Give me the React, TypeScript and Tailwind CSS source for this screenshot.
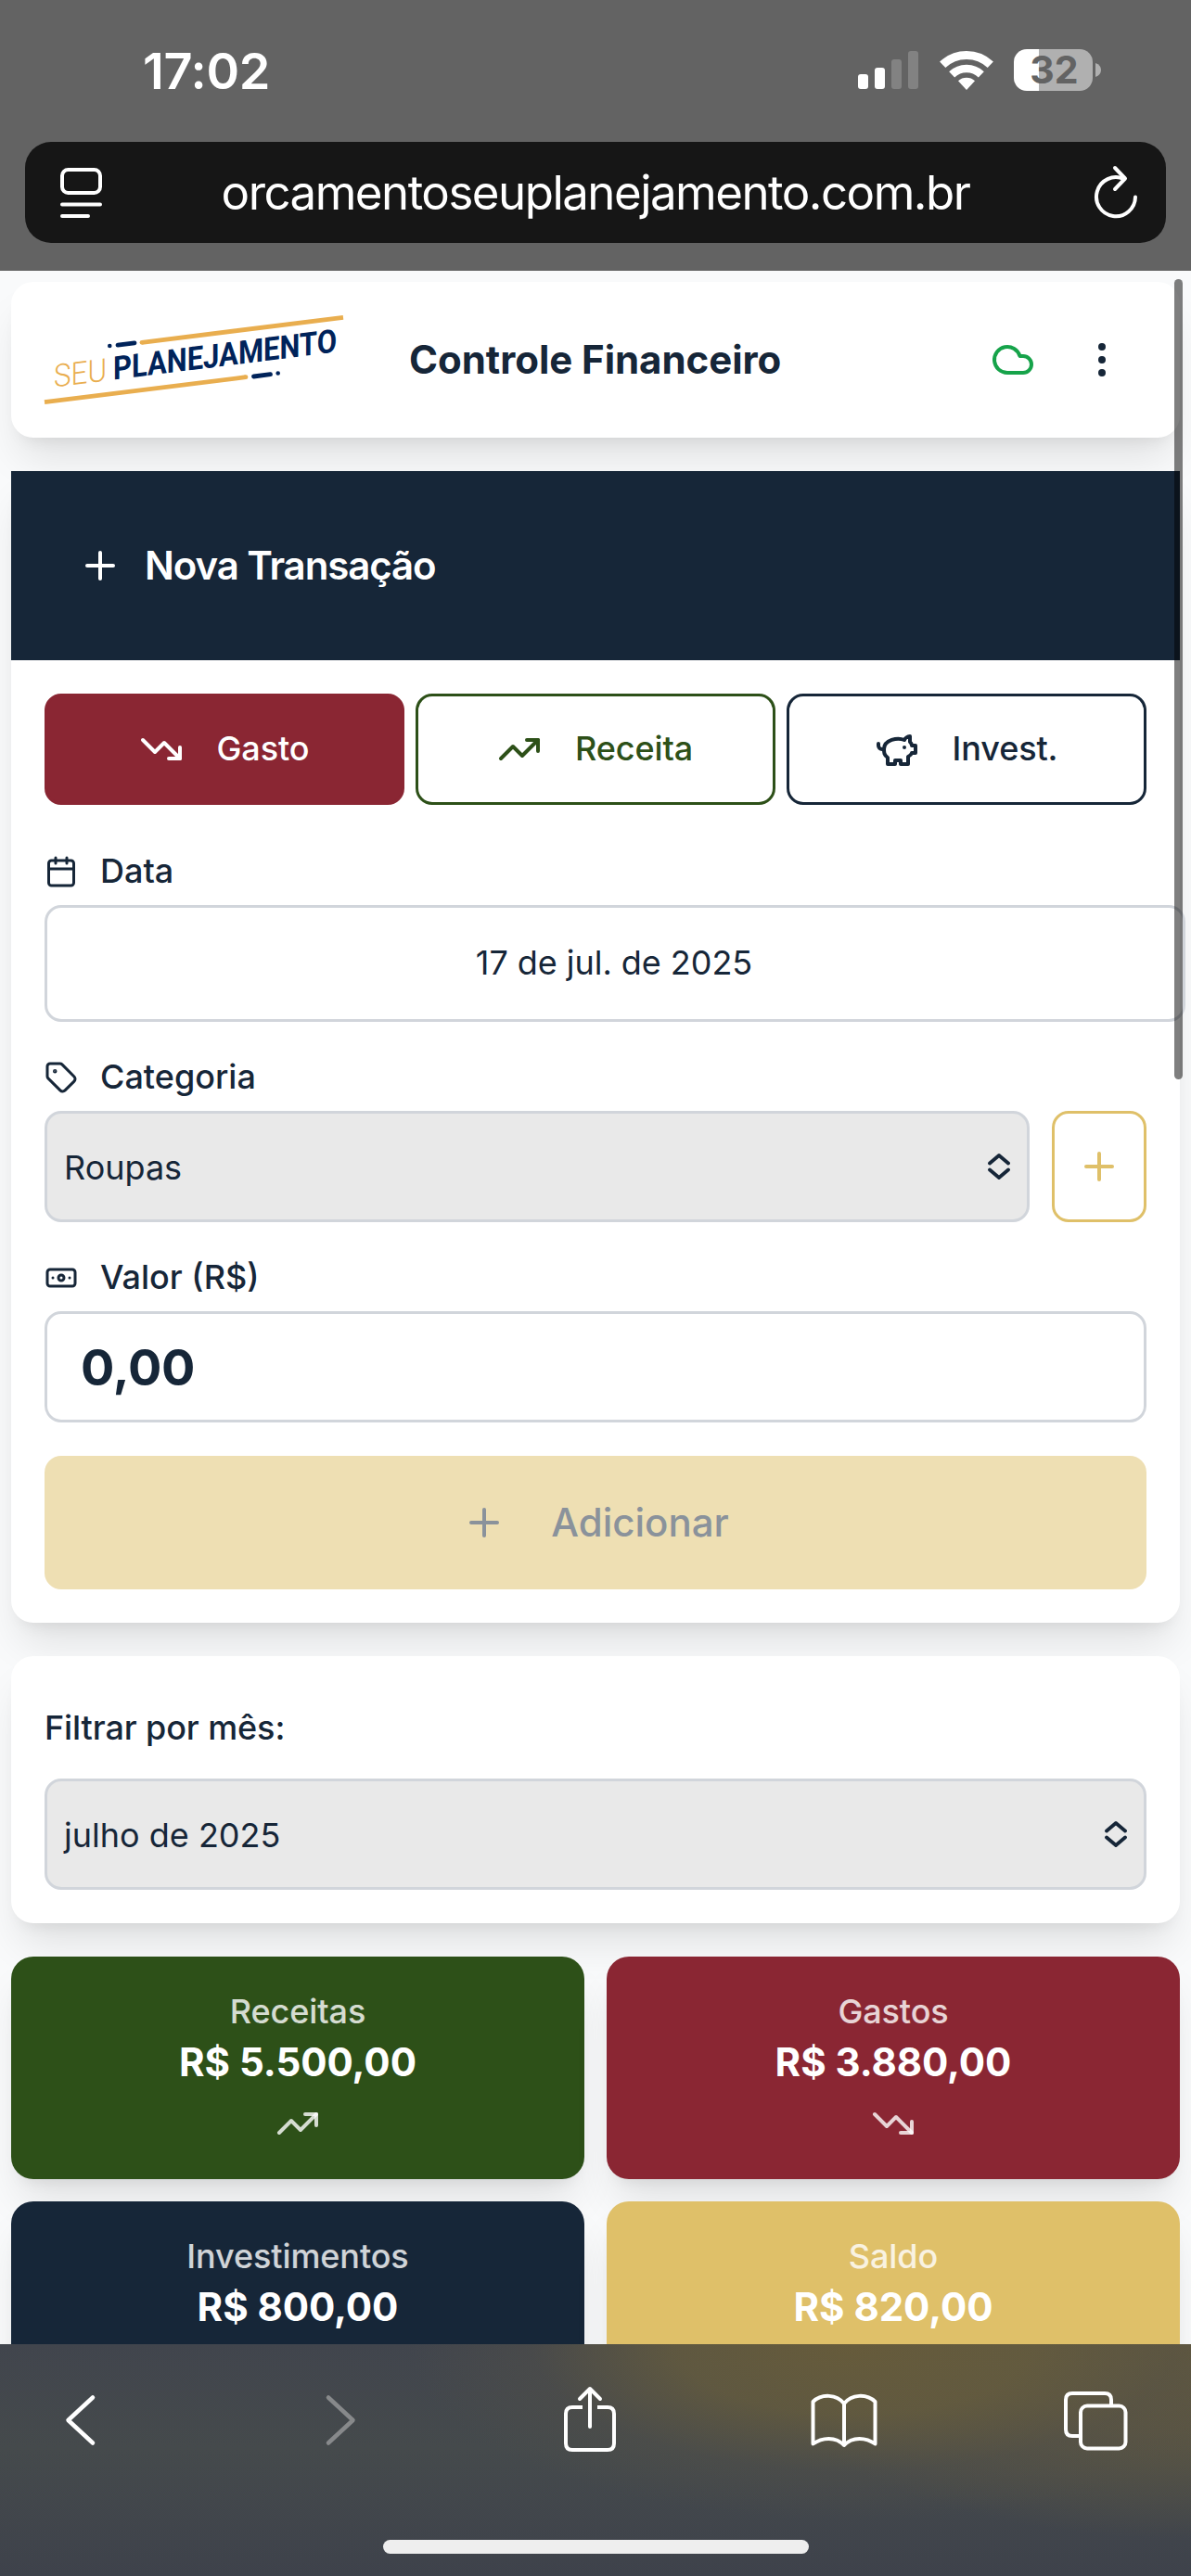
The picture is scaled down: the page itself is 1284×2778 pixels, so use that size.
import type { ReactNode } from "react";
import {
  Banknote,
  Calendar,
  Cloud,
  EllipsisVertical,
  Plus,
  Tag,
  TrendingDown,
  TrendingUp,
} from "lucide-react";

const cardShadow =
  "shadow-[0_30px_45px_-9px_rgba(0,0,0,0.1),0_12px_18px_-12px_rgba(0,0,0,0.1)]";

function PiggyIcon() {
  return (
    <svg className="size-12" viewBox="0 0 24 24" fill="none" stroke="currentColor" strokeWidth="2" strokeLinecap="round" strokeLinejoin="round">
      <path d="M19 5c-1.5 0-2.8 1.4-3 2-3.5-1.5-11-.3-11 5 0 1.8 0 3 2 4.500V20h4v-2h3v2h4v-4c1-.5 1.700-1 2-2h2v-4h-2c0-1-.5-1.500-1-2V5z" />
      <path d="M2 9v1c0 1.100.9 2 2 2h1" />
      <path d="M16 11h.01" />
    </svg>
  );
}

function StatusBar() {
  return (
    <div className="flex h-[153px] items-start justify-between pl-[154px] pr-[97px]">
      <div className="mt-[44px] text-[54px] leading-[66px] font-semibold tracking-[-0.3px] text-white">17:02</div>
      <div className="mt-[53px] flex h-[45px] items-center">
        <div className="flex h-[43px] items-end gap-[7px] pb-[1px]">
          <span className="h-[16px] w-[11px] rounded-[3px] bg-white" />
          <span className="h-[23px] w-[11px] rounded-[3px] bg-white" />
          <span className="h-[32px] w-[11px] rounded-[3px] bg-[#828282]" />
          <span className="h-[41px] w-[11px] rounded-[3px] bg-[#828282]" />
        </div>
        <svg className="ml-[23px] h-[42px] w-[58px]" viewBox="-1 0 174 126" fill="none" stroke="#fff">
          <path d="M8.6 44.4A112.5 112.5 0 0 1 163.4 44.4" strokeWidth="27" />
          <path d="M38.5 76A69 69 0 0 1 133.5 76" strokeWidth="26" />
          <path d="M86 126L59 97A40 40 0 0 1 113 97Z" fill="#fff" stroke="none" />
        </svg>
        <div className="ml-[22px] flex h-[45px] w-[85px] items-center justify-center rounded-[14px] bg-[linear-gradient(90deg,#fff_27px,#b0b0b0_27px)] pl-[2px] text-[41px] leading-none font-bold text-[#636363]">
          32
        </div>
        <svg className="ml-[3px] h-[15px] w-[6px]" viewBox="0 0 6 15">
          <path d="M0 0C4 1.5 6 4 6 7.5S4 13.5 0 15Z" fill="#b0b0b0" />
        </svg>
      </div>
    </div>
  );
}

function AddressBar() {
  return (
    <div className="mx-[27px] flex h-[109px] items-center justify-between rounded-[28px] bg-[#161616] pl-[36px] pr-[30px] text-white">
      <svg className="h-[56px] w-[48px]" viewBox="0 0 48 56" fill="none" stroke="currentColor" strokeWidth="4" strokeLinecap="round">
        <rect x="4" y="3" width="41" height="25" rx="6.5" />
        <path d="M4 40.500H45M4 53H32" />
      </svg>
      <div className="mr-[6px] text-[51px] leading-[62px] tracking-[-1.52px]">orcamentoseuplanejamento.com.br</div>
      <svg className="mb-[2px] h-[58px] w-[48px]" viewBox="0 0 48 58" fill="none" stroke="currentColor" strokeWidth="4" strokeLinecap="round" strokeLinejoin="round">
        <path d="M45 34.500A21 21 0 1 1 32.500 15" />
        <path d="M23 3L34 14.500L23 26" />
      </svg>
    </div>
  );
}

function Logo() {
  return (
    <svg className="h-[96px] w-[322px] shrink-0 overflow-visible" viewBox="0 0 322 96">
      <g fill="none" strokeWidth="4.800">
        <path d="M105 29.300L322 2.300M0 93.700L217 66.700" stroke="#e9ae4f" />
        <path d="M79 32.200L97 29.800M225.500 66L243.500 63.700" stroke="#00235a" strokeLinecap="round" />
      </g>
      <circle cx="105" cy="29.300" r="2.400" fill="#e9ae4f" />
      <circle cx="217" cy="66.700" r="2.400" fill="#e9ae4f" />
      <circle cx="70.300" cy="33" r="2.300" fill="#00235a" />
      <circle cx="251.700" cy="62.500" r="2.300" fill="#00235a" />
      <g transform="skewY(-7.100)" fontFamily="Roboto, sans-serif">
        <text x="10" y="78.700" fontSize="34" fontWeight="300" fill="#e9ae4f" textLength="57" lengthAdjust="spacingAndGlyphs">
          SEU
        </text>
        <text x="74" y="78.700" fontSize="35" fontWeight="700" fill="#00235a" textLength="241" lengthAdjust="spacingAndGlyphs">
          PLANEJAMENTO
        </text>
      </g>
    </svg>
  );
}

function TypeButton({ className, icon, label }: { className: string; icon: ReactNode; label: string }) {
  return (
    <button className={`flex h-[120px] items-center justify-center gap-[36px] rounded-[18px] border-3 pr-px text-[36px] font-medium ${className}`}>
      {icon}
      <span className="pb-[2px] tracking-[-0.1px]">{label}</span>
    </button>
  );
}

function FieldLabel({ icon, children }: { icon: ReactNode; children: ReactNode }) {
  return (
    <div className="mb-3 flex h-12 items-center gap-6 text-[36px] leading-[48px] font-medium">
      {icon}
      <span className="pb-[2px]">{children}</span>
    </div>
  );
}

function SelectBox({ value }: { value: string }) {
  return (
    <div className="flex h-[120px] flex-1 items-center justify-between rounded-[18px] border-3 border-[#d1d5db] bg-[#e9e9e9] pl-[18px] pr-[18px] text-[36px]">
      <span className="pt-[2px]">{value}</span>
      <svg className="h-[30px] w-[26px]" viewBox="0 0 26 30" fill="none" stroke="currentColor" strokeWidth="3.800" strokeLinecap="round" strokeLinejoin="round">
        <path d="M4 11.500L14 3L24 11.500M4 18.500L14 27L24 18.500" />
      </svg>
    </div>
  );
}

function SummaryCard({ className, label, value, icon }: { className: string; label: string; value: string; icon: ReactNode }) {
  return (
    <div className={`flex h-[240px] flex-col items-center rounded-[24px] pt-[35px] text-white ${cardShadow} ${className}`}>
      <div className="text-[36px] leading-[48px] font-medium tracking-[-0.1px] text-white/80">{label}</div>
      <div className="mt-px text-[42px] leading-[60px] font-bold tracking-[-0.05px]">{value}</div>
      <div className="mt-3 text-white/80">{icon}</div>
    </div>
  );
}

function BrowserToolbar() {
  return (
    <footer className="h-[250px] shrink-0 bg-[radial-gradient(ellipse_480px_190px_at_920px_0px,#665b3b_0%,rgba(100,91,62,0.85)_40%,rgba(84,81,71,0.4)_72%,rgba(66,70,76,0)_100%),radial-gradient(ellipse_480px_210px_at_1284px_0px,rgba(102,91,59,0.9)_0%,rgba(98,89,64,0.75)_45%,rgba(66,70,76,0)_100%),linear-gradient(180deg,#41454d_0%,#454a4c_45%,#3e424b_100%)]">
      <div className="flex h-[164px] items-center pl-[50px] text-white">
        <svg className="h-[80px] w-[72px]" viewBox="0 0 72 80" fill="none" stroke="currentColor" strokeWidth="4.500" strokeLinecap="round" strokeLinejoin="round">
          <path d="M50 15.500L23.500 40L50 64.500" />
        </svg>
        <svg className="ml-[209px] h-[80px] w-[72px] text-[#87898b]" viewBox="0 0 72 80" fill="none" stroke="currentColor" strokeWidth="4.500" strokeLinecap="round" strokeLinejoin="round">
          <path d="M23 15.500L49.500 40L23 64.500" />
        </svg>
        <svg className="ml-[197px] h-[80px] w-[72px]" viewBox="0 0 72 80" fill="none" stroke="currentColor" strokeWidth="4" strokeLinecap="round" strokeLinejoin="round">
          <path d="M28 26H17Q10 26 10 33V65Q10 72 17 72H55Q62 72 62 65V33Q62 26 55 26H44" strokeLinecap="butt" />
          <path d="M36 47V6M25 17L36 6L47 17" />
        </svg>
        <svg className="ml-[202px] h-[80px] w-[72px]" viewBox="0 0 72 80" fill="none" stroke="currentColor" strokeWidth="4" strokeLinecap="round" strokeLinejoin="round">
          <path d="M36 22C28 12 12 11 2.500 20V65.500C12 58.500 27 57 36 67C45 57 60 58.500 69.500 65.500V20C60 11 44 12 36 22ZM36 22V67" />
        </svg>
        <svg className="ml-[199px] h-[80px] w-[72px]" viewBox="0 0 72 80" fill="none" stroke="currentColor" strokeWidth="4">
          <rect x="20" y="24.500" width="48.500" height="46" rx="7" />
          <path d="M20 57H11Q4 57 4 50V18Q4 11 11 11H46Q53 11 53 18V24.500" />
        </svg>
      </div>
      <div className="mx-auto mt-[47px] h-[15px] w-[459px] rounded-full bg-[#eeeeee]" />
    </footer>
  );
}

export default function App() {
  return (
    <div className="relative flex h-[2778px] w-[1284px] flex-col overflow-hidden bg-[#f9fafb] font-['Inter',sans-serif] text-[#162638]">
      <div className="h-[292px] shrink-0 bg-[#636363]">
        <StatusBar />
        <AddressBar />
      </div>

      <main className="min-h-0 flex-1 overflow-hidden px-3 pt-3">
        <header className={`flex h-[168px] items-center rounded-[24px] bg-white pl-9 ${cardShadow}`}>
          <Logo />
          <h1 className="ml-[71px] text-[42px] leading-[60px] font-bold tracking-[-0.05px] whitespace-nowrap">Controle Financeiro</h1>
          <div className="mr-[60px] ml-auto flex items-center gap-12">
            <Cloud className="size-12 text-[#16a34a]" />
            <EllipsisVertical className="size-12" />
          </div>
        </header>

        <section className={`mt-9 rounded-b-[24px] bg-white ${cardShadow}`}>
          <div className="flex h-[204px] items-center gap-[24px] bg-[#162638] pl-[72px] text-[42px] font-semibold text-white">
            <Plus className="size-12" />
            <h2 className="pb-[2px] tracking-[-1.1px]">Nova Transação</h2>
          </div>
          <div className="p-9">
            <div className="grid grid-cols-3 gap-3">
              <TypeButton className="border-[#8a2633] bg-[#8a2633] text-white" icon={<TrendingDown className="size-12" />} label="Gasto" />
              <TypeButton className="border-[#2d5018] text-[#2d5018]" icon={<TrendingUp className="size-12" />} label="Receita" />
              <TypeButton className="border-[#162638]" icon={<PiggyIcon />} label="Invest." />
            </div>

            <div className="mt-12">
              <FieldLabel icon={<Calendar className="size-9" />}>Data</FieldLabel>
              <div className="flex h-[126px] w-[1230px] items-center justify-center rounded-[18px] border-3 border-[#d1d5db] pr-[2px] pb-[2px] text-[36px] tracking-[-0.05px]">
                17 de jul. de 2025
              </div>
            </div>

            <div className="mt-9">
              <FieldLabel icon={<Tag className="size-9" />}>Categoria</FieldLabel>
              <div className="flex gap-6">
                <SelectBox value="Roupas" />
                <button className="flex h-[120px] w-[102px] items-center justify-center rounded-[18px] border-3 border-[#dfc069] text-[#dfc069]">
                  <Plus className="size-12" />
                </button>
              </div>
            </div>

            <div className="mt-9">
              <FieldLabel icon={<Banknote className="size-9" />}>Valor (R$)</FieldLabel>
              <div className="flex h-[120px] items-center rounded-[18px] border-3 border-[#d1d5db] pl-9 text-[54px] font-bold tracking-[-0.2px]">0,00</div>
            </div>

            <button className="mt-9 flex h-[144px] w-full items-center justify-center gap-12 rounded-[18px] bg-[#eedfb3] text-[42px] font-medium text-[#8a929b]">
              <Plus className="size-12" />
              <span className="pb-[2px]">Adicionar</span>
            </button>
          </div>
        </section>

        <section className={`mt-9 h-[288px] rounded-[24px] bg-white px-9 pt-[53px] ${cardShadow}`}>
          <div className="mb-[31px] h-12 text-[36px] leading-[48px] font-medium tracking-[-0.1px]">Filtrar por mês:</div>
          <div className="flex">
            <SelectBox value="julho de 2025" />
          </div>
        </section>

        <section className="mt-9 grid grid-cols-2 gap-6">
          <SummaryCard className="bg-[#2d5018]" label="Receitas" value="R$ 5.500,00" icon={<TrendingUp className="size-12" />} />
          <SummaryCard className="bg-[#8a2633]" label="Gastos" value="R$ 3.880,00" icon={<TrendingDown className="size-12" />} />
          <SummaryCard className="bg-[#162638]" label="Investimentos" value="R$ 800,00" icon={<PiggyIcon />} />
          <SummaryCard className="bg-[#dfc069]" label="Saldo" value="R$ 820,00" icon={<TrendingUp className="size-12" />} />
        </section>
      </main>

      <BrowserToolbar />
      <div className="absolute top-[301px] right-[9px] h-[863px] w-[9px] rounded-full bg-black/50" />
    </div>
  );
}
